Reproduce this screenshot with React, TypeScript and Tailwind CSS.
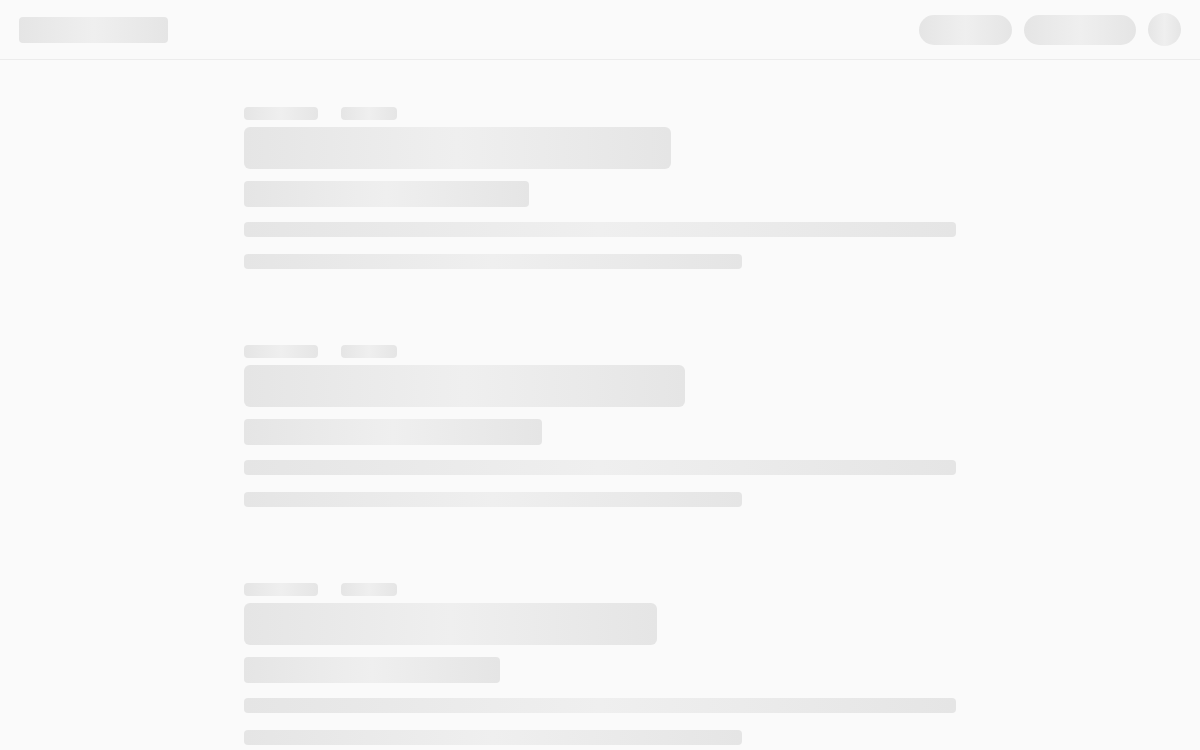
const shimmer = 'bg-linear-to-r from-[#e5e5e5] via-[#efefef] to-[#e5e5e5]';

interface BlockProps {
    titleWidth: string;
    subWidth: string;
}

function Block({ titleWidth, subWidth }: BlockProps) {
    return (
        <div className="flex flex-col">
            <div className="flex items-center gap-[23px]">
                <div className={`h-[13px] w-[74px] rounded ${shimmer}`} />
                <div className={`h-[13px] w-[56px] rounded ${shimmer}`} />
            </div>
            <div className={`mt-[7px] h-[42px] rounded-md ${shimmer} ${titleWidth}`} />
            <div className={`mt-[12px] h-[26px] rounded ${shimmer} ${subWidth}`} />
            <div className={`mt-[15px] h-[15px] w-full rounded ${shimmer}`} />
            <div className={`mt-[17px] h-[15px] w-[498px] rounded ${shimmer}`} />
        </div>
    );
}

export default function App() {
    return (
        <div className="min-h-screen bg-[#fafafa]">
            <header className="flex h-[60px] items-center justify-between border-b border-[#ececec] px-[19px]">
                <div className={`h-[26px] w-[149px] rounded ${shimmer}`} />
                <div className="flex items-center gap-3">
                    <div className={`h-[30px] w-[93px] rounded-full ${shimmer}`} />
                    <div className={`h-[30px] w-[112px] rounded-full ${shimmer}`} />
                    <div className={`h-[33px] w-[33px] rounded-full ${shimmer}`} />
                </div>
            </header>
            <main className="mx-auto flex max-w-[712px] flex-col gap-[76px] pt-[47px]">
                <Block titleWidth="w-[427px]" subWidth="w-[285px]" />
                <Block titleWidth="w-[441px]" subWidth="w-[298px]" />
                <Block titleWidth="w-[413px]" subWidth="w-[256px]" />
            </main>
        </div>
    );
}
